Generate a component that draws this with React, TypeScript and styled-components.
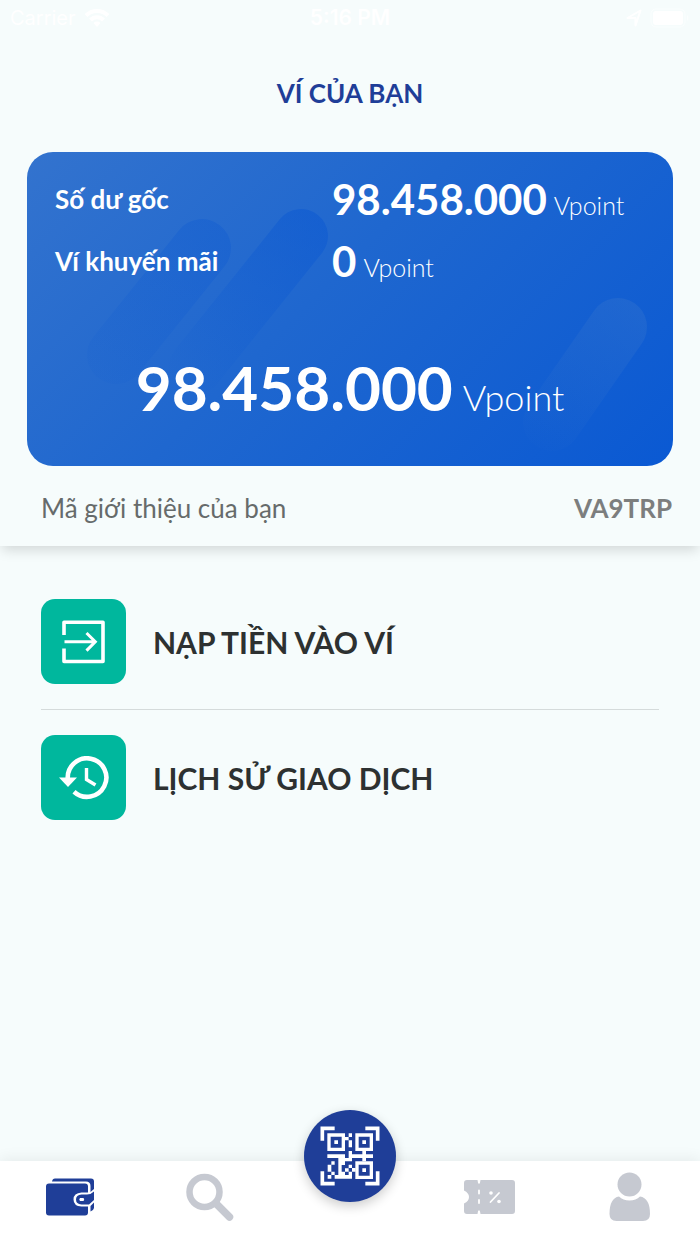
import React from 'react';
import styled, { createGlobalStyle } from 'styled-components';

const Global = createGlobalStyle`
  * { box-sizing: border-box; }
  body { margin: 0; background: #f6fcfc; font-family: Lato, "Noto Sans", sans-serif; }
  h1, h2, p, dl, dt, dd, ul { margin: 0; padding: 0; }
  button { font: inherit; border: 0; padding: 0; background: none; cursor: pointer; }
`;

const Screen = styled.div`
  min-height: 100vh;
  display: flex;
  flex-direction: column;
  background: #f6fcfc;
`;

const StatusBar = styled.div`
  display: grid;
  grid-template-columns: 1fr auto 1fr;
  align-items: center;
  height: 36px;
  padding: 0 10px;
  color: #fff;
  font: 400 20px/24px Inter, sans-serif;
`;

const StatusGroup = styled.div<{ $end?: boolean }>`
  display: flex;
  align-items: center;
  gap: 8px;
  justify-content: ${(p) => (p.$end ? 'flex-end' : 'flex-start')};
`;

const StatusTime = styled.span`
  font-size: 21px;
  font-weight: 600;
`;

const Summary = styled.header`
  padding-bottom: 20px;
  box-shadow: 0 6px 12px -2px rgba(0, 0, 0, 0.15);
`;

const Title = styled.h1`
  padding: 40px 0 42px;
  text-align: center;
  color: #1f3e98;
  font-size: 26px;
  line-height: 34px;
  font-weight: 700;
`;

const Card = styled.section`
  position: relative;
  margin: 0 27px;
  padding: 16px 28px 42px;
  border-radius: 26px;
  overflow: hidden;
  color: #fff;
  background: linear-gradient(135deg, #3373ce 0%, #1f67cf 45%, #0a59d3 100%);
`;

const CardArt = styled.svg`
  position: absolute;
  inset: 0;
  width: 100%;
  height: 100%;
`;

const Balances = styled.dl`
  position: relative;
  display: grid;
  grid-template-columns: 277px 1fr;
  grid-auto-rows: 62px;
  align-items: center;
`;

const BalanceName = styled.dt`
  font-size: 26px;
  line-height: 34px;
  font-weight: 700;
`;

const Amount = styled.dd<{ $large?: boolean }>`
  display: flex;
  align-items: baseline;
  gap: ${(p) => (p.$large ? 10 : 7)}px;
  white-space: nowrap;
  font-weight: 700;
  font-size: ${(p) => (p.$large ? 62 : 42)}px;
  line-height: ${(p) => (p.$large ? 74 : 50)}px;
`;

const Unit = styled.span<{ $large?: boolean }>`
  font-weight: 300;
  font-size: ${(p) => (p.$large ? 36 : 25)}px;
  line-height: 1;
`;

const Total = styled.div`
  position: relative;
  display: flex;
  justify-content: center;
  padding-top: 58px;
`;

const Referral = styled.div`
  display: flex;
  justify-content: space-between;
  align-items: center;
  padding: 24px 28px 0 41px;
  font-size: 26px;
  line-height: 36px;
  color: #666b6b;
`;

const Code = styled.strong`
  color: #7c7e7e;
  font-weight: 700;
`;

const Actions = styled.ul`
  list-style: none;
  padding: 28px 41px 0;
`;

const ActionItem = styled.li`
  & + & { border-top: 1px solid #d5dbdb; }
`;

const ActionButton = styled.button`
  display: flex;
  align-items: center;
  gap: 27px;
  width: 100%;
  padding: 25px 0;
  text-align: left;
  color: #2d3131;
  font-size: 30px;
  line-height: 40px;
  font-weight: 700;
`;

const Tile = styled.span`
  flex: none;
  display: grid;
  place-items: center;
  width: 85px;
  height: 85px;
  border-radius: 14px;
  background: #00b79d;
`;

const TabBar = styled.nav`
  margin-top: auto;
  display: grid;
  grid-template-columns: repeat(5, 1fr);
  height: 83px;
  background: #fff;
  box-shadow: 0 -2px 14px rgba(0, 0, 0, 0.07);
`;

const Tab = styled.button<{ $active?: boolean }>`
  display: flex;
  justify-content: center;
  align-items: center;
  padding-bottom: 11px;
  color: ${(p) => (p.$active ? '#1f3e98' : '#c6c9d1')};
`;

const ScanSlot = styled.div`
  position: relative;
`;

const ScanButton = styled.button`
  position: absolute;
  left: 50%;
  top: -51px;
  width: 92px;
  height: 92px;
  transform: translateX(-50%);
  display: grid;
  place-items: center;
  border-radius: 50%;
  background: #1f3e98;
  box-shadow: 0 4px 12px rgba(0, 0, 0, 0.2);
`;

const WifiIcon = () => (
  <svg width="26" height="20" viewBox="0 0 26 20" fill="none" stroke="#fff" strokeWidth="4" aria-hidden="true">
    <path d="M2 7.500A15.500 15.500 0 0 1 24 7.500M6.500 12A9 9 0 0 1 19.500 12" />
    <path d="M13 19l-3.500-4a5 5 0 0 1 7 0z" fill="#fff" stroke="none" />
  </svg>
);

const LocationIcon = () => (
  <svg width="16" height="18" viewBox="0 0 16 18" fill="none" stroke="#fff" strokeWidth="2" strokeLinejoin="round" aria-hidden="true">
    <path d="M1.500 9L14.500 1.500 9.500 16.500V9z" />
  </svg>
);

const BatteryIcon = () => (
  <svg width="40" height="20" viewBox="0 0 40 20" aria-hidden="true">
    <rect x="1" y="1" width="34" height="18" rx="5" fill="none" stroke="#fff" strokeOpacity="0.5" />
    <rect x="3" y="3" width="30" height="14" rx="3" fill="#fff" />
    <path d="M37 7c2 1 2 5 0 6z" fill="#fff" fillOpacity="0.5" />
  </svg>
);

const DepositIcon = () => (
  <svg width="44" height="44" viewBox="0 0 44 44" fill="none" stroke="#fff" strokeWidth="3" aria-hidden="true">
    <path d="M2 15V2.200H41V41.500H2V28.500" strokeWidth="3.600" strokeLinejoin="round" />
    <path d="M2.500 21.800H33.500M24.500 13L33.300 21.800L24.500 30.600" />
  </svg>
);

const HistoryIcon = () => (
  <svg width="50" height="44" viewBox="0 0 50 44" aria-hidden="true">
    <path d="M8.800 23A19.300 19.300 0 1 1 15 35.800" fill="none" stroke="#fff" strokeWidth="4.600" />
    <path d="M0 21.500H18L9 31z" fill="#fff" />
    <path d="M27.500 12V23.500L36.500 29" fill="none" stroke="#fff" strokeWidth="3.400" />
  </svg>
);

const QrIcon = () => (
  <svg width="60" height="60" viewBox="0 0 180 180" fill="none" stroke="#fff" aria-hidden="true">
    <path d="M7 44V7H44M136 7H173V44M173 136V173H136M44 173H7V136" strokeWidth="11" />
    <path d="M27 27H70V70H27zM111 27H154V70H111zM111 111H154V154H111z" strokeWidth="10" />
    <g fill="#fff" stroke="none">
      <path d="M43 43h11v11H43zM127 43h11v11h-11zM127 127h11v11h-11z" />
      <path d="M86 22h10v11H86zM75 33h11v10H75zM86 43h10v21H86z" />
      <path d="M22 85h53v11h11V75h10v10h31V75h11v10h21v11h-21v10h-11V96H96v10H75v11H65v20h10v-10h11v10H75v10h11v-10h10v21H44v-11h11V96H22z" />
      <path d="M34 106h10v10H34zM23 116h11v21H23zM34 137h10v10H34zM23 147h11v11H23zM86 116h10v10H86zM96 126h11v11H96z" />
    </g>
  </svg>
);

const WalletIcon = () => (
  <svg width="48" height="38" viewBox="0 0 48 38" fill="currentColor" aria-hidden="true">
    <path d="M6 3.500Q6.500 .500 9 .500H45Q48 .500 48 3.500V11L44.500 14V8Q44.500 3.500 40 3.500z" />
    <path d="M3 5.500H39Q42 5.500 42 8.500V14.500H35.500Q27.500 15 27.500 21.500Q27.500 28 35.500 28.500H42V34.500Q42 37.500 39 37.500H3Q0 37.500 0 34.500V8.500Q0 5.500 3 5.500z" />
    <path d="M35.500 16.500Q30 17 30 21.500Q30 26 35.500 26.500H43L48 22V13.500Q45 16.500 41 16.500zM34 20H37.500Q39 21.500 37.500 23H34Q32.500 21.500 34 20z" fillRule="evenodd" />
    <path d="M44.500 28L48 24.500V30Q47.500 32.500 44.500 33.500z" />
  </svg>
);

const SearchIcon = () => (
  <svg width="50" height="50" viewBox="0 0 50 50" fill="none" stroke="currentColor" aria-hidden="true">
    <circle cx="19.500" cy="20" r="15" strokeWidth="6.500" />
    <path d="M31 31.500L44.500 45" strokeWidth="7.500" strokeLinecap="round" />
  </svg>
);

const CouponIcon = () => (
  <svg width="52" height="34" viewBox="0 0 52 34" aria-hidden="true">
    <path fill="currentColor" d="M3 0H13.500Q13.800 3.500 15 4Q16.200 3.500 16.500 0H48Q51 0 51 3V31Q51 34 48 34H16.500Q16.200 30.500 15 30Q13.800 30.500 13.500 34H3Q0 34 0 31V23.500Q5 21 5 17Q5 13 0 10.500V3Q0 0 3 0z" />
    <g stroke="#fff" strokeWidth="1.800" strokeLinecap="round">
      <path d="M15 10.500v3M15 20v3M26.500 22l8.500-9" />
    </g>
    <circle cx="27" cy="13" r="1.800" fill="#fff" />
    <circle cx="35" cy="21.500" r="1.800" fill="#fff" />
  </svg>
);

const PersonIcon = () => (
  <svg width="42" height="50" viewBox="0 0 42 50" fill="currentColor" aria-hidden="true">
    <circle cx="20.500" cy="12.500" r="12" />
    <path d="M10 24.500Q14 28.500 20.500 28.500T31 24.500Q41 26 41 42Q41 49 34 49H7.500Q.500 49 .500 42Q.500 26 10 24.500z" />
  </svg>
);

export default function App() {
  return (
    <>
      <Global />
      <Screen>
        <Summary>
          <StatusBar>
            <StatusGroup>
              Carrier
              <WifiIcon />
            </StatusGroup>
            <StatusTime>5:16 PM</StatusTime>
            <StatusGroup $end>
              <LocationIcon />
              <BatteryIcon />
            </StatusGroup>
          </StatusBar>
          <Title>VÍ CỦA BẠN</Title>
          <Card>
            <CardArt viewBox="0 0 646 314" preserveAspectRatio="none" aria-hidden="true">
              <defs>
                <linearGradient id="dark" gradientUnits="userSpaceOnUse" x1="290" y1="60" x2="150" y2="235">
                  <stop offset="0" stopColor="#0957d2" stopOpacity="0.5" />
                  <stop offset="1" stopColor="#0957d2" stopOpacity="0" />
                </linearGradient>
                <linearGradient id="faint" gradientUnits="userSpaceOnUse" x1="190" y1="70" x2="70" y2="240">
                  <stop offset="0" stopColor="#0957d2" stopOpacity="0.32" />
                  <stop offset="1" stopColor="#0957d2" stopOpacity="0.06" />
                </linearGradient>
                <linearGradient id="light" gradientUnits="userSpaceOnUse" x1="600" y1="145" x2="510" y2="300">
                  <stop offset="0" stopColor="#3373ce" stopOpacity="0.4" />
                  <stop offset="1" stopColor="#3373ce" stopOpacity="0.02" />
                </linearGradient>
              </defs>
              <g fill="none" strokeLinecap="round">
                <path stroke="url(#faint)" strokeWidth="58" d="M175 96L89 203" />
                <path stroke="url(#dark)" strokeWidth="54" d="M274 84L169 215" />
                <path stroke="url(#light)" strokeWidth="58" d="M591 175L525 270" />
              </g>
            </CardArt>
            <Balances>
              <BalanceName>Số dư gốc</BalanceName>
              <Amount>
                98.458.000<Unit>Vpoint</Unit>
              </Amount>
              <BalanceName>Ví khuyến mãi</BalanceName>
              <Amount>
                0<Unit>Vpoint</Unit>
              </Amount>
            </Balances>
            <Total>
              <Amount as="p" $large>
                98.458.000<Unit $large>Vpoint</Unit>
              </Amount>
            </Total>
          </Card>
          <Referral>
            <span>Mã giới thiệu của bạn</span>
            <Code>VA9TRP</Code>
          </Referral>
        </Summary>
        <Actions>
          <ActionItem>
            <ActionButton type="button">
              <Tile><DepositIcon /></Tile>
              NẠP TIỀN VÀO VÍ
            </ActionButton>
          </ActionItem>
          <ActionItem>
            <ActionButton type="button">
              <Tile><HistoryIcon /></Tile>
              LỊCH SỬ GIAO DỊCH
            </ActionButton>
          </ActionItem>
        </Actions>
        <TabBar>
          <Tab type="button" $active aria-label="Ví"><WalletIcon /></Tab>
          <Tab type="button" aria-label="Tìm kiếm"><SearchIcon /></Tab>
          <ScanSlot>
            <ScanButton type="button" aria-label="Quét mã QR"><QrIcon /></ScanButton>
          </ScanSlot>
          <Tab type="button" aria-label="Ưu đãi"><CouponIcon /></Tab>
          <Tab type="button" aria-label="Tài khoản"><PersonIcon /></Tab>
        </TabBar>
      </Screen>
    </>
  );
}
